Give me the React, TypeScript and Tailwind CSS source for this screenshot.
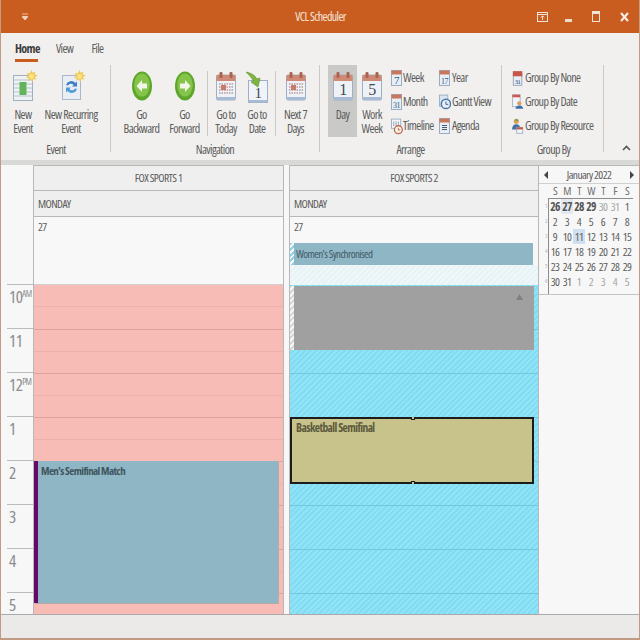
import type { ReactNode } from "react";

const hours = [
  { label: "10", suffix: "AM" },
  { label: "11" },
  { label: "12", suffix: "PM" },
  { label: "1" },
  { label: "2" },
  { label: "3" },
  { label: "4" },
  { label: "5" },
];

const calendarRows = [
  ["26", "27", "28", "29", "30", "31", "1"],
  ["2", "3", "4", "5", "6", "7", "8"],
  ["9", "10", "11", "12", "13", "14", "15"],
  ["16", "17", "18", "19", "20", "21", "22"],
  ["23", "24", "25", "26", "27", "28", "29"],
  ["30", "31", "1", "2", "3", "4", "5"],
];

// Big calendar page with rings, used by Today / Next 7 / Day / Work Week
function CalendarIcon({ label, grid }: { label?: string; grid?: boolean }) {
  return (
    <svg width="20" height="30" viewBox="0 0 20 30">
      <rect x="0.5" y="4" width="19" height="25" rx="1.5" fill="#eef2f7" stroke="#9fb0c6" />
      <rect x="0.5" y="26" width="19" height="3" fill="#a9bcd6" />
      <rect x="0.5" y="4" width="19" height="6" fill="#cf8a76" />
      <rect x="3.500" y="1" width="3" height="6" rx="1" fill="#a8644f" />
      <rect x="13.500" y="1" width="3" height="6" rx="1" fill="#a8644f" />
      {label && (
        <text x="10" y="24" textAnchor="middle" fontSize="16" fontFamily="Liberation Serif, serif" fill="#3f4a57">
          {label}
        </text>
      )}
      {grid && (
        <g>
          {[13, 16, 19, 22].map((y) => (
            <line key={y} x1="3" x2="17" y1={y} y2={y} stroke="#b89a9a" strokeWidth="1.6" strokeDasharray="1.5 1" />
          ))}
          <rect x="5" y="14" width="5" height="5" fill="#c9796a" />
        </g>
      )}
    </svg>
  );
}

function Sparkle() {
  return (
    <svg className="absolute -top-[5px] -right-[5px]" width="13" height="13" viewBox="0 0 13 13">
      <path d="M6.5 0l1.3 3 2.8-1.4-1 3 3 .9-2.8 1.4 1.6 2.7-3-.7-.9 3.1-1.7-2.7-2.6 1.7.5-3.1L.6 7.5l2.7-1.6L1.9 3l3 .4z" fill="#f2c84b" />
      <circle cx="6.5" cy="6.5" r="2.4" fill="#fbe58c" />
    </svg>
  );
}

function NewEventIcon() {
  return (
    <div className="relative mt-[4px]">
      <svg width="20" height="26" viewBox="0 0 20 26" className="block">
        <rect x="0.5" y="0.5" width="19" height="25" fill="#eef2f3" stroke="#9fb0c0" />
        {[5, 9, 13, 17, 21].map((y) => (
          <line key={y} x1="1" x2="19" y1={y} y2={y} stroke="#b5c2cc" />
        ))}
        <rect x="6.5" y="7" width="7" height="13" fill="#63b35a" />
      </svg>
      <Sparkle />
    </div>
  );
}

function RecurringIcon() {
  return (
    <div className="relative mt-[4px]">
      <svg width="19" height="25" viewBox="0 0 19 25" className="block">
        <rect x="0.5" y="0.5" width="18" height="24" fill="#e9eef5" stroke="#a8b8c8" />
        <path d="M4 10a5.5 5.5 0 0 1 9.5-2l1.5-1.5v5h-5l1.6-1.6A3.4 3.4 0 0 0 6 10.5z" fill="#3d80c7" />
        <path d="M15 14a5.5 5.5 0 0 1-9.5 2L4 17.5v-5h5l-1.6 1.6a3.4 3.4 0 0 0 5.6-.6z" fill="#4f9bd8" />
      </svg>
      <Sparkle />
    </div>
  );
}

function ArrowCircle({ flip }: { flip?: boolean }) {
  return (
    <svg width="20" height="30" viewBox="0 0 20 30" className={flip ? "-scale-x-100" : ""}>
      <ellipse cx="10" cy="15" rx="10" ry="14.5" fill="#5ca62c" />
      <ellipse cx="10" cy="14" rx="7.8" ry="11.5" fill="#86c34a" />
      <path d="M4.5 15l5.5-6v3.6h5v4.8h-5V21z" fill="#f1f7e6" />
    </svg>
  );
}

function GoToDateIcon() {
  return (
    <svg width="24" height="34" viewBox="0 0 24 34">
      <rect x="3.5" y="9.5" width="19" height="22" fill="#f0f3f7" stroke="#9fb0c6" />
      <rect x="3.5" y="29" width="19" height="2.5" fill="#a9bcd6" />
      <text x="13" y="27" textAnchor="middle" fontSize="15" fontFamily="Liberation Serif, serif" fill="#3f4a57">
        1
      </text>
      <path d="M1 1c5 1 9 3 11 7l3-1-2 9-7-5 2.500-1C7 7 4 4 1 1z" fill="#7db540" stroke="#5e8d2b" strokeWidth="0.6" />
    </svg>
  );
}

function SmallCalendar({ label }: { label: string }) {
  return (
    <svg width="11" height="16" viewBox="0 0 11 16">
      <rect x="0.5" y="0.5" width="10" height="15" fill="#e8eef6" stroke="#9aadc4" />
      <rect x="0.5" y="0.5" width="10" height="4" fill="#c9785c" />
      <text x="5.500" y="13.500" textAnchor="middle" fontSize={label.length > 1 ? 8 : 11} fontFamily="Liberation Serif, serif" fill="#3a5a80">
        {label}
      </text>
    </svg>
  );
}

function TimelineIcon() {
  return (
    <svg width="13" height="17" viewBox="0 0 13 17">
      <rect x="0.5" y="0.5" width="10" height="10" fill="#f3f5f8" stroke="#9aadc4" />
      <path d="M3 3v5M5.500 3v5M8 3v5" stroke="#8f9fb3" />
      <circle cx="8" cy="12" r="4.300" fill="#f6efe9" stroke="#c0694a" strokeWidth="1.400" />
      <path d="M8 10v2.300h2" stroke="#c0694a" fill="none" />
    </svg>
  );
}

function GanttIcon() {
  return (
    <svg width="13" height="17" viewBox="0 0 13 17">
      <rect x="0.5" y="0.5" width="9" height="12" fill="#dbe5f0" stroke="#9aadc4" />
      <circle cx="7.500" cy="10" r="5" fill="#e6eef7" stroke="#4a78ad" strokeWidth="1.600" />
      <path d="M7.500 7.500V10.500H10" stroke="#2f5f97" fill="none" />
    </svg>
  );
}

function AgendaIcon() {
  return (
    <svg width="11" height="16" viewBox="0 0 11 16">
      <rect x="0.5" y="0.5" width="10" height="15" fill="#e8eef6" stroke="#9aadc4" />
      <rect x="0.5" y="0.5" width="10" height="4" fill="#c9785c" />
      <path d="M3 7.500h5M3 9.500h5M3 11.500h5" stroke="#4b5b70" />
    </svg>
  );
}

function GroupIcon({ kind }: { kind: "none" | "date" | "resource" }) {
  return (
    <svg width="14" height="18" viewBox="0 0 14 18">
      {kind === "none" && (
        <g>
          <rect x="1.500" y="3.500" width="10" height="14" fill="#e9eef6" stroke="#8f9fb5" />
          <rect x="1" y="1" width="11" height="6" fill="#c4564a" />
          <text x="6.500" y="16" textAnchor="middle" fontSize="8" fontFamily="Liberation Serif, serif" fill="#2f4f78">
            31
          </text>
        </g>
      )}
      {kind === "date" && (
        <g>
          <rect x="0.500" y="0.500" width="9" height="14" fill="#f0f3f8" stroke="#a3b2c6" />
          <rect x="0.500" y="0.500" width="9" height="3" fill="#d2584b" />
          <circle cx="8.500" cy="10.500" r="2.500" fill="#d9a05d" />
          <path d="M4 17c.3-3 2-4 4.500-4s4.200 1 4.500 4z" fill="#3e6fa8" />
        </g>
      )}
      {kind === "resource" && (
        <g>
          <circle cx="5" cy="3.500" r="3" fill="#d9a05d" />
          <path d="M3 2.500c1-2 4-2 4.500.5z" fill="#5f9a3a" />
          <path d="M0 13c.3-4 2-6 5-6s4.700 2 5 6z" fill="#3e6fa8" />
          <rect x="5.500" y="10.500" width="7" height="7" fill="#f3f5f8" stroke="#9aadc4" />
          <rect x="5.500" y="10.500" width="7" height="2.500" fill="#c4564a" />
        </g>
      )}
    </svg>
  );
}

function Separator({ className = "" }: { className?: string }) {
  return <div className={`w-px h-[87px] bg-[#c9c9c7] shrink-0 ${className}`} />;
}

function BigButton({ icon, lines, width, active }: { icon: ReactNode; lines: string[]; width: string; active?: boolean }) {
  return (
    <div className={`flex flex-col items-center shrink-0 h-[72px] ${width} ${active ? "bg-[#c9c9c7]" : ""}`}>
      <div className="h-[43px] pt-[6px] flex items-start justify-center">{icon}</div>
      {lines.map((line) => (
        <span key={line} className="text-[12px] leading-[14px] text-[#5c5c5c] whitespace-nowrap">
          {line}
        </span>
      ))}
    </div>
  );
}

function SmallButton({ icon, label, gap = "gap-0" }: { icon: ReactNode; label: string; gap?: string }) {
  return (
    <div className={`flex items-center h-[24px] ${gap}`}>
      <span className="w-[12px] flex justify-start">{icon}</span>
      <span className="text-[12px] text-[#5c5c5c] whitespace-nowrap">{label}</span>
    </div>
  );
}

function RibbonGroup({ title, width, titleClass = "", children }: { title: string; width: string; titleClass?: string; children: ReactNode }) {
  return (
    <div className={`flex flex-col shrink-0 ${width}`}>
      <div className="h-[75px] flex items-start">{children}</div>
      <div className={`text-[12px] leading-[16px] pt-[2px] text-[#5c5c5c] text-center ${titleClass}`}>{title}</div>
    </div>
  );
}

function TitleBar() {
  return (
    <div className="h-[33px] bg-[#c95d20] shrink-0 flex items-center pl-[21px] pr-[10px] text-[#f4e4d8]">
      <svg width="6" height="8" viewBox="0 0 6 8">
        <path d="M0 1h6M0 3.500h6L3 7z" stroke="#f0d8c4" fill="#f0d8c4" strokeWidth="0.8" />
      </svg>
      <div className="flex-1 text-center text-[12px] pl-[76px]">VCL Scheduler</div>
      <div className="flex items-center gap-[17px]">
        <svg width="11" height="11" viewBox="0 0 11 11">
          <rect x="0.5" y="1.500" width="10" height="9" fill="none" stroke="#f4e4d8" />
          <path d="M0.500 3.500h10M5.500 9V5M3.800 6.500l1.700-1.700 1.700 1.700" stroke="#f4e4d8" fill="none" />
        </svg>
        <div className="w-[7px] h-[3px] bg-[#f0dccb] mt-[8px]" />
        <div className="w-[8px] h-[11px] border border-[#f4e4d8] border-t-[3px] ml-[3px]" />
        <svg width="9" height="10" viewBox="0 0 9 10" className="ml-[3px]">
          <path d="M1 1l7 8M8 1L1 9" stroke="#f8eee6" strokeWidth="2" />
        </svg>
      </div>
    </div>
  );
}

function Tabs() {
  return (
    <div className="h-[30px] shrink-0 flex items-start pl-[14px] pt-[7px] text-[12px] leading-[18px] text-[#5c5c5c]">
      <div className="flex flex-col w-[23px]">
        <span className="font-bold text-[#3d3d3d] whitespace-nowrap">Home</span>
        <span className="h-[3px] mt-[1px] bg-[#c95d20]" />
      </div>
      <span className="ml-[18px]">View</span>
      <span className="ml-[18px]">File</span>
    </div>
  );
}

function Ribbon() {
  return (
    <div className="h-[97px] shrink-0 flex items-start pt-[2px]">
      <RibbonGroup title="Event" width="w-[109px] pl-[5px]" titleClass="pr-[4px]">
        <BigButton icon={<NewEventIcon />} lines={["New", "Event"]} width="w-[34px]" />
        <BigButton icon={<RecurringIcon />} lines={["New Recurring", "Event"]} width="w-[62px]" />
      </RibbonGroup>
      <Separator />
      <RibbonGroup title="Navigation" width="w-[208px]">
        <div className="w-[9px] shrink-0" />
        <BigButton icon={<ArrowCircle />} lines={["Go", "Backward"]} width="w-[43px]" />
        <BigButton icon={<ArrowCircle flip />} lines={["Go", "Forward"]} width="w-[43px]" />
        <Separator className="ml-[1px] mt-[6px] !h-[65px]" />
        <BigButton icon={<CalendarIcon grid />} lines={["Go to", "Today"]} width="w-[36px]" />
        <BigButton icon={<GoToDateIcon />} lines={["Go to", "Date"]} width="w-[26px]" />
        <Separator className="ml-[5px] mt-[6px] !h-[65px]" />
        <BigButton icon={<CalendarIcon grid />} lines={["Next 7", "Days"]} width="w-[39px]" />
      </RibbonGroup>
      <Separator />
      <RibbonGroup title="Arrange" width="w-[181px]">
        <div className="w-[8px] shrink-0" />
        <BigButton icon={<CalendarIcon label="1" />} lines={["Day"]} width="w-[29px]" active />
        <BigButton icon={<CalendarIcon label="5" />} lines={["Work", "Week"]} width="w-[30px]" />
        <div className="flex flex-col pt-[1px] w-[48px] shrink-0 ml-[4px]">
          <SmallButton icon={<SmallCalendar label="7" />} label="Week" />
          <SmallButton icon={<SmallCalendar label="31" />} label="Month" />
          <SmallButton icon={<TimelineIcon />} label="Timeline" />
        </div>
        <div className="flex flex-col pt-[1px]">
          <SmallButton icon={<SmallCalendar label="17" />} label="Year" gap="gap-[1px]" />
          <SmallButton icon={<GanttIcon />} label="Gantt View" gap="gap-[1px]" />
          <SmallButton icon={<AgendaIcon />} label="Agenda" gap="gap-[1px]" />
        </div>
      </RibbonGroup>
      <Separator />
      <RibbonGroup title="Group By" width="w-[101px] pl-[10px]" titleClass="pr-[8px]">
        <div className="flex flex-col pt-[1px]">
          <SmallButton icon={<GroupIcon kind="none" />} label="Group By None" gap="gap-[1px]" />
          <SmallButton icon={<GroupIcon kind="date" />} label="Group By Date" gap="gap-[1px]" />
          <SmallButton icon={<GroupIcon kind="resource" />} label="Group By Resource" gap="gap-[1px]" />
        </div>
      </RibbonGroup>
      <Separator />
      <div className="flex-1 flex justify-center pt-[80px] pl-[10px]">
        <svg width="9" height="6" viewBox="0 0 9 6">
          <path d="M1 5l3.500-3.500L8 5" stroke="#555" strokeWidth="1.600" fill="none" />
        </svg>
      </div>
    </div>
  );
}

function TimeGutter() {
  return (
    <div className="w-[32px] shrink-0 flex flex-col bg-[#f7f7f7]">
      <div className="h-[119px] shrink-0" />
      <div className="flex-1 overflow-hidden">
        {hours.map((hour) => (
          <div key={hour.label} className="h-[44px] ml-[6px] pl-[2px] border-t border-[#bcbcbc] text-[#8c8c8c] flex items-start pt-[3px]">
            <span className="text-[17px] leading-[18px]">{hour.label}</span>
            {hour.suffix && <span className="text-[9px] leading-[12px]">{hour.suffix}</span>}
          </div>
        ))}
      </div>
    </div>
  );
}

function HourLines({ major, minor }: { major: string; minor: string }) {
  return (
    <>
      {hours.map((hour, index) => (
        <div key={hour.label} className={`h-[44px] ${index > 0 ? `border-t ${major}` : ""}`}>
          <div className={`h-[22px] border-b ${minor}`} />
        </div>
      ))}
    </>
  );
}

function ColumnHeader({ title }: { title: string }) {
  return (
    <>
      <div className="h-[25px] shrink-0 bg-[#efefef] border-b border-[#b8b8b8] flex items-center justify-center text-[11.5px] text-[#5c5c5c]">
        {title}
      </div>
      <div className="h-[26px] shrink-0 bg-[#efefef] border-b border-[#b8b8b8] flex items-center pl-[4px] text-[11.5px] text-[#5c5c5c]">
        MONDAY
      </div>
    </>
  );
}

function FirstColumn() {
  return (
    <div className="w-[251px] shrink-0 flex flex-col border-x border-t border-[#b8b8b8]">
      <ColumnHeader title="FOX SPORTS 1" />
      <div className="h-[68px] shrink-0 bg-[#f8f8f8] border-b border-[#d0d0d0] pl-[4px] pt-[3px] text-[11.5px] leading-[14px] text-[#5c5c5c]">
        27
      </div>
      <div className="relative flex-1 overflow-hidden bg-[#f6bcb5]">
        <HourLines major="border-[#dea39c]" minor="border-[#eeb1aa]" />
        <div className="absolute left-0 top-[176px] w-[244px] h-[142px] flex bg-[#8fb6c4] shadow-[1px_1px_0_#b9a8a8]">
          <div className="w-[4px] bg-[#66086b] shrink-0" />
          <div className="pl-[3px] pt-[2px] text-[11px] leading-[16px] font-bold text-[#3f5560]">Men's Semifinal Match</div>
        </div>
      </div>
    </div>
  );
}

function SecondColumn() {
  return (
    <div className="w-[250px] shrink-0 flex flex-col border-x border-t border-[#b8b8b8]">
      <ColumnHeader title="FOX SPORTS 2" />
      <div className="h-[26px] shrink-0 bg-[#f8f8f8] pl-[4px] pt-[3px] text-[11.5px] leading-[14px] text-[#5c5c5c]">27</div>
      <div className="h-[22px] w-[243px] shrink-0 flex bg-[#8fb6c4]">
        <div className="w-[4px] bg-[repeating-linear-gradient(135deg,#8fd4e8_0px,#8fd4e8_2px,#f4f8f9_2px,#f4f8f9_4px)]" />
        <div className="pl-[2px] text-[11px] leading-[22px] text-[#3f5a68]">Women's Synchronised</div>
      </div>
      <div className="h-[20px] shrink-0 bg-[repeating-linear-gradient(135deg,#e6f3f7_0px,#e6f3f7_2px,#f1f7f9_2px,#f1f7f9_4px)]" />
      <div className="relative flex-1 overflow-hidden bg-[repeating-linear-gradient(135deg,#80dcf3_0px,#80dcf3_2px,#92e3f6_2px,#92e3f6_4px)]">
        <HourLines major="border-[#73c6dc]" minor="border-transparent" />
        <div className="absolute left-0 top-[1px] w-[4px] h-[64px] bg-[repeating-linear-gradient(135deg,#d8d8d8_0px,#d8d8d8_2px,#f6f6f6_2px,#f6f6f6_4px)]" />
        <div className="absolute left-[4px] top-[1px] w-[240px] h-[64px] bg-[#a0a0a0] flex justify-end pr-[11px] pt-[8px]">
          <svg width="7" height="6" viewBox="0 0 7 6">
            <path d="M3.500 0L7 6H0z" fill="#808080" />
          </svg>
        </div>
        <div className="absolute left-0 top-[132px] w-[244px] h-[67px] bg-[#c8c38b] border-2 border-[#1c1c1c] pl-[4px] pt-[1px] text-[11.5px] leading-[16px] font-bold text-[#5c5a3c]">
          Basketball Semifinal
          <div className="absolute left-[119px] -top-[2px] w-[4px] h-[3px] bg-[#c8c38b] border-x border-b border-[#1c1c1c]" />
          <div className="absolute left-[119px] -bottom-[2px] w-[4px] h-[3px] bg-[#c8c38b] border-x border-t border-[#1c1c1c]" />
        </div>
      </div>
    </div>
  );
}

function MiniCalendar() {
  return (
    <div className="flex-1 flex flex-col bg-[#f7f7f7] border-t border-[#b8b8b8] text-[#5c5c5c]">
      <div className="h-[18px] shrink-0 border-b border-[#d0d0d0] flex items-center justify-between px-[5px]">
        <svg width="4" height="8" viewBox="0 0 4 8">
          <path d="M4 0v8L0 4z" fill="#444" />
        </svg>
        <span className="text-[11.5px]">January 2022</span>
        <svg width="4" height="8" viewBox="0 0 4 8">
          <path d="M0 0v8l4-4z" fill="#444" />
        </svg>
      </div>
      <div className="grid grid-cols-7 w-[84px] ml-[10px] h-[14px] text-[11.5px] leading-[14px] text-center shrink-0 text-[#707070]">
        {["S", "M", "T", "W", "T", "F", "S"].map((day, index) => (
          <span key={index}>{day}</span>
        ))}
      </div>
      <div className="flex h-[97px] shrink-0 border-b border-[#c4c4c4]">
        <div className="w-[10px] shrink-0 border-r border-[#8c8c8c] flex flex-col pt-[1px]">
          {calendarRows.map((_, index) => (
            <span key={index} className="h-[15px] text-[6px] leading-[15px] text-right pr-[1px] text-[#b5b5b5]">
              {index + 1}
            </span>
          ))}
        </div>
        <div className="w-[84px] h-[92px] border-t border-[#8c8c8c] grid grid-cols-7 auto-rows-[15px] text-[11.5px] leading-[15px] text-center">
          {calendarRows.flatMap((row, rowIndex) =>
            row.map((day, dayIndex) => {
              const isBold = rowIndex === 0 && dayIndex < 4;
              const isOutside = (rowIndex === 0 && (dayIndex === 4 || dayIndex === 5)) || (rowIndex === 5 && dayIndex > 1);
              const isToday = day === "11" && rowIndex === 2;
              const isHighlighted = rowIndex === 0 && dayIndex === 1;
              return (
                <span
                  key={`${rowIndex}-${dayIndex}`}
                  className={`${isBold ? "font-bold text-[#555]" : ""} ${isOutside ? "text-[#a5a5a5]" : ""} ${isToday ? "bg-[#cfe0f0]" : ""} ${isHighlighted ? "bg-[#e2e9f0]" : ""}`}
                >
                  {day}
                </span>
              );
            })
          )}
        </div>
      </div>
    </div>
  );
}

export default function App() {
  return (
    <div className="w-[640px] h-[640px] flex flex-col overflow-hidden bg-[#f1f0ee] border-x border-b-2 border-[#c09a82] font-['Open_Sans',sans-serif] font-stretch-condensed tracking-[-0.6px]">
      <TitleBar />
      <Tabs />
      <Ribbon />
      <div className="h-[5px] shrink-0 bg-[#d9d9d7]" />
      <div className="h-[450px] shrink-0 flex border-b border-[#a9a9a9] bg-[#f7f7f7]">
        <TimeGutter />
        <FirstColumn />
        <div className="w-[5px] shrink-0" />
        <SecondColumn />
        <MiniCalendar />
      </div>
      <div className="flex-1 bg-[#ebeae8]" />
    </div>
  );
}
